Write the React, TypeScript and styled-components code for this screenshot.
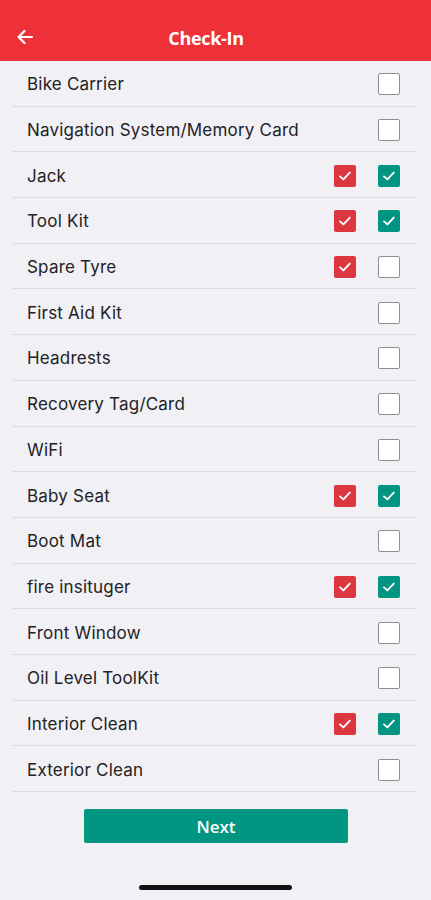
import React from 'react'
import styled, { createGlobalStyle } from 'styled-components'

type Item = { label: string; first?: boolean; second?: boolean }

const items: Item[] = [
  { label: 'Bike Carrier' },
  { label: 'Navigation System/Memory Card' },
  { label: 'Jack', first: true, second: true },
  { label: 'Tool Kit', first: true, second: true },
  { label: 'Spare Tyre', first: true },
  { label: 'First Aid Kit' },
  { label: 'Headrests' },
  { label: 'Recovery Tag/Card' },
  { label: 'WiFi' },
  { label: 'Baby Seat', first: true, second: true },
  { label: 'Boot Mat' },
  { label: 'fire insituger', first: true, second: true },
  { label: 'Front Window' },
  { label: 'Oil Level ToolKit' },
  { label: 'Interior Clean', first: true, second: true },
  { label: 'Exterior Clean' },
]

const GlobalStyle = createGlobalStyle`
  body {
    margin: 0;
    background: #f1f0f5;
    font-family: Inter, "Liberation Sans", Arial, sans-serif;
  }
`

const Tick = () => (
  <svg width="16" height="16" viewBox="0 0 16 16" fill="none">
    <path d="M3 8.4 L6.4 11.4 L12.8 4.6" stroke="#fff" strokeWidth="1.9" strokeLinecap="round" strokeLinejoin="round" />
  </svg>
)

const App: React.FC = () => {
  return (
    <Page>
      <GlobalStyle />
      <Header>
        <BackButton aria-label="Back">
          <svg width="18" height="16" viewBox="0 0 18 16" fill="none">
            <path d="M16 8 H2.5 M8.5 2 L2.5 8 L8.5 14" stroke="#fff" strokeWidth="2.2" strokeLinecap="round" strokeLinejoin="round" />
          </svg>
        </BackButton>
        <Title>Check-In</Title>
      </Header>
      <List>
        {items.map((item) => (
          <Row key={item.label}>
            <Label>{item.label}</Label>
            {item.first && (
              <Box $variant="red">
                <Tick />
              </Box>
            )}
            <Box $variant={item.second ? 'teal' : 'empty'}>{item.second && <Tick />}</Box>
          </Row>
        ))}
      </List>
      <Footer>
        <NextButton>Next</NextButton>
      </Footer>
      <HomeBar />
    </Page>
  )
}

const Page = styled.div`
  width: 431px;
  min-height: 900px;
  background: #f1f0f5;
  display: flex;
  flex-direction: column;
`

const Header = styled.div`
  height: 61px;
  background: #ee3039;
  display: flex;
  align-items: center;
  justify-content: center;
  position: relative;
  padding: 14px 19px 0 0;
  box-sizing: border-box;
`

const BackButton = styled.div`
  position: absolute;
  left: 16px;
  top: 29px;
  display: flex;
`

const Title = styled.div`
  color: #fff;
  font-weight: 700;
  font-size: 18px;
  font-family: "Open Sans", "Liberation Sans", sans-serif;
  letter-spacing: -0.3px;
`

const List = styled.div`
  padding: 0 15px 0 12px;
  display: flex;
  flex-direction: column;
`

const Row = styled.div`
  height: 45.7px;
  box-sizing: border-box;
  border-bottom: 1px solid #dcdce0;
  display: flex;
  align-items: center;
  gap: 22px;
  padding: 2px 16px 0 15px;
`

const Label = styled.div`
  flex: 1;
  font-size: 17px;
  letter-spacing: 0.2px;
  color: #222224;
`

const Box = styled.div<{ $variant: 'red' | 'teal' | 'empty' }>`
  width: 22px;
  height: 22px;
  box-sizing: border-box;
  border-radius: 2px;
  display: flex;
  align-items: center;
  justify-content: center;
  background: ${(p) => (p.$variant === 'red' ? '#dc3640' : p.$variant === 'teal' ? '#009580' : '#fff')};
  border: ${(p) => (p.$variant === 'empty' ? '1.5px solid #8e8e93' : 'none')};
`

const Footer = styled.div`
  display: flex;
  justify-content: center;
  padding-top: 17px;
`

const NextButton = styled.button`
  width: 264px;
  height: 34px;
  margin-left: 1px;
  border: none;
  border-radius: 2px;
  background: #009682;
  color: #fff;
  font-size: 17px;
  font-weight: 600;
  font-family: "Open Sans", "Liberation Sans", sans-serif;
`

const HomeBar = styled.div`
  width: 153px;
  height: 5px;
  border-radius: 3px;
  background: #111;
  margin: 42px auto 0;
`

export default App
